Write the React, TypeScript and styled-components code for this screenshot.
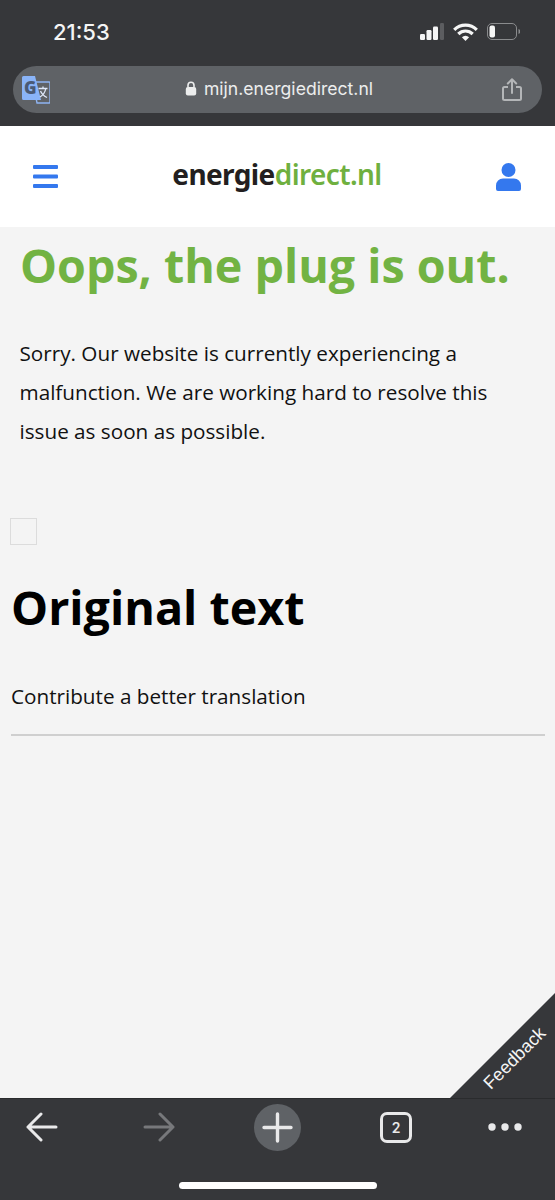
import { createGlobalStyle, styled } from "styled-components";

const GlobalStyle = createGlobalStyle`
    html, body {
        margin: 0;
        padding: 0;
        background: #36373a;
    }
    * { box-sizing: border-box; }
`

const Phone = styled.div`
    width: 555px;
    height: 1200px;
    display: flex;
    flex-direction: column;
    overflow: hidden;
    font-family: "Open Sans", sans-serif;
`

const BrowserTop = styled.div`
    height: 126px;
    background: #36373a;
    padding: 0 13px;
    display: flex;
    flex-direction: column;
`

const StatusBar = styled.div`
    height: 66px;
    padding: 0 22px 3px 40px;
    display: flex;
    align-items: center;
    justify-content: space-between;
    color: #f5f5f5;
`

const Clock = styled.span`
    font-family: Inter, sans-serif;
    font-size: 22px;
    font-weight: 500;
`

const StatusIcons = styled.div`
    display: flex;
    align-items: center;
    gap: 9px;
`

const AddressBar = styled.div`
    height: 47px;
    width: 529px;
    border-radius: 24px;
    background: #5f6266;
    display: flex;
    align-items: center;
    justify-content: space-between;
    padding: 0 20px 0 9px;
`

const Url = styled.div`
    display: flex;
    align-items: center;
    gap: 7px;
    margin: -2px 0 0 6px;
    color: #eceded;
    font-family: Inter, sans-serif;
    font-size: 17.6px;
`

const SiteHeader = styled.header`
    height: 101px;
    background: #fff;
    display: flex;
    align-items: center;
    justify-content: space-between;
    padding: 0 34px 0 33px;
`

const Logo = styled.div`
    font-family: "Noto Sans", sans-serif;
    font-size: 28px;
    font-weight: 700;
    line-height: 1;
    margin-top: -5px;
    letter-spacing: -0.6px;
    color: #231f20;
`

const LogoAccent = styled.span`
    font-weight: 600;
    color: #6fb03f;
`

const Main = styled.main`
    position: relative;
    flex: 1;
    background: #f4f4f4;
    display: flex;
    flex-direction: column;
`

const Notice = styled.section`
    padding: 6px 19px 0 20px;
`

const Title = styled.h1`
    margin: 0;
    font-size: 46.6px;
    line-height: 64px;
    font-weight: 700;
    white-space: nowrap;
    color: #72b343;
`

const Message = styled.p`
    margin: 37px 0 0 -0.5px;
    font-size: 20.7px;
    line-height: 39px;
    color: #111;
`

const Translation = styled.section`
    padding: 67px 10px 0 11px;
`

const BrokenImage = styled.div`
    width: 27px;
    height: 27px;
    margin-left: -1px;
    border: 1px solid #dcdcdc;
`

const Heading = styled.h2`
    margin: 24px 0 0;
    font-size: 46.7px;
    line-height: 76px;
    font-weight: 700;
    color: #000;
`

const Contribute = styled.p`
    margin: 35px 0 0;
    padding-bottom: 22px;
    font-size: 20.7px;
    line-height: 32px;
    color: #111;
    border-bottom: 2px solid #cfcfcf;
`

const FeedbackTab = styled.div`
    position: absolute;
    right: 0;
    bottom: 0;
    width: 105px;
    height: 105px;
    background: #36373a;
    clip-path: polygon(100% 0, 100% 100%, 0 100%);
`

const FeedbackLabel = styled.span`
    position: absolute;
    left: 25px;
    top: 54px;
    font-family: "Liberation Sans", sans-serif;
    font-size: 18px;
    line-height: 22px;
    color: #f5f5f5;
    transform: rotate(-45deg);
    white-space: nowrap;
`

const Toolbar = styled.nav`
    height: 102px;
    background: #36373a;
    border-top: 1px solid #2a2b2d;
    display: flex;
    flex-direction: column;
    align-items: center;
`

const ToolRow = styled.div`
    width: 100%;
    height: 56px;
    padding: 0 25px;
    display: grid;
    grid-template-columns: 34px 1fr 48px 1fr 34px;
    align-items: center;
    justify-items: center;
`

const ForwardSlot = styled.div`
    justify-self: start;
    margin-left: 84px;
    display: flex;
`

const TabsSlot = styled.div`
    justify-self: end;
    margin-right: 84px;
    display: flex;
`

const MoreSlot = styled.div`
    margin-right: 17px;
    display: flex;
`

const PlusCircle = styled.div`
    width: 47px;
    height: 47px;
    border-radius: 50%;
    background: #5f6266;
    display: flex;
    align-items: center;
    justify-content: center;
`

const TabCount = styled.div`
    width: 32px;
    height: 31px;
    border: 3px solid #e9e9ea;
    border-radius: 7px;
    color: #e9e9ea;
    font-family: Inter, sans-serif;
    font-size: 14px;
    font-weight: 600;
    display: flex;
    align-items: center;
    justify-content: center;
`

const HomeIndicator = styled.div`
    width: 198px;
    height: 7px;
    margin-top: 27px;
    border-radius: 4px;
    background: #fff;
`

function Signal() {
    return (
        <svg width="24" height="17" viewBox="0 0 24 17">
            <rect x="0" y="11" width="5" height="6" rx="1.2" fill="#f5f5f5" />
            <rect x="6.5" y="7" width="5" height="10" rx="1.2" fill="#f5f5f5" />
            <rect x="13" y="3.5" width="5" height="13.5" rx="1.2" fill="#f5f5f5" />
            <rect x="20" y="0" width="4" height="17" rx="1.2" fill="#5c5d60" />
        </svg>
    )
}

function Wifi() {
    return (
        <svg width="25" height="18" viewBox="0 0 25 18" fill="none" stroke="#f5f5f5" strokeWidth="3.200">
            <path d="M1.200 6.800a16 16 0 0 1 22.600 0" />
            <path d="M5.300 11a10.200 10.200 0 0 1 14.400 0" />
            <path d="M12.500 18l-3.600-3.800a5 5 0 0 1 7.200 0z" fill="#f5f5f5" stroke="none" />
        </svg>
    )
}

function Battery() {
    return (
        <svg width="33" height="17" viewBox="0 0 33 17" fill="none">
            <rect x="0.5" y="0.5" width="29" height="16" rx="4.5" stroke="#8a8b8d" />
            <rect x="2.5" y="2.5" width="5.5" height="12" rx="2" fill="#f5f5f5" />
            <path d="M31.5 6v5a2.6 2.6 0 0 0 0-5z" fill="#8a8b8d" />
        </svg>
    )
}

function TranslateIcon() {
    return (
        <svg width="28" height="28" viewBox="0 0 28 28">
            <path d="M11 6h16a1 1 0 0 1 1 1v19a1 1 0 0 1-1 1H15z" fill="#5f6266" stroke="#8fb4f2" strokeWidth="1.4" />
            <path d="M1.5 0H13l6 24H1.5A1.5 1.500 0 0 1 0 22.500V1.500A1.500 1.500 0 0 1 1.500 0z" fill="#8ab4f8" />
            <text x="2" y="18" fontFamily="Open Sans, sans-serif" fontSize="17" fontWeight="800" fill="#4a5a75">G</text>
            <path d="M16.500 12.500h9M21 10.500v2M18 21c3-1.800 5-4.200 5.800-8.500M18.500 15c1 2.500 3.500 5 6.500 6.500" fill="none" stroke="#dfe8f8" strokeWidth="1.300" />
        </svg>
    )
}

function Lock() {
    return (
        <svg width="12" height="15" viewBox="0 0 12 15">
            <path d="M3 6.500V4.200a3 3 0 0 1 6 0v2.300" fill="none" stroke="#eceded" strokeWidth="1.600" />
            <rect x="0.800" y="6" width="10.400" height="8.500" rx="2" fill="#eceded" />
        </svg>
    )
}

function ShareIcon() {
    return (
        <svg width="20" height="24" viewBox="0 0 20 24" fill="none" stroke="#b4b6b8" strokeWidth="2">
            <path d="M6 9H2.500A1.500 1.500 0 0 0 1 10.500v10A1.500 1.500 0 0 0 2.500 22h15a1.500 1.500 0 0 0 1.500-1.500v-10A1.500 1.500 0 0 0 17.500 9H14" />
            <path d="M10 15V1.500M5.800 5.500L10 1.300l4.200 4.200" strokeLinecap="round" strokeLinejoin="round" />
        </svg>
    )
}

function MenuIcon() {
    return (
        <svg width="25" height="23" viewBox="0 0 25 23" fill="#3478ee">
            <rect x="0" y="0" width="25" height="4" rx="1" />
            <rect x="0" y="9.500" width="25" height="4" rx="1" />
            <rect x="0" y="19" width="25" height="4" rx="1" />
        </svg>
    )
}

function UserIcon() {
    return (
        <svg width="25" height="28" viewBox="0 0 25 28" fill="#3478ee">
            <circle cx="12.500" cy="7" r="7" />
            <path d="M7 15.500h11a7 7 0 0 1 7 7V26a2 2 0 0 1-2 2H2a2 2 0 0 1-2-2v-3.500a7 7 0 0 1 7-7z" />
        </svg>
    )
}

function ArrowIcon({ flip, color }: { flip?: boolean; color: string }) {
    return (
        <svg width="32" height="30" viewBox="0 0 32 30" fill="none" stroke={color} strokeWidth="3" strokeLinecap="round" strokeLinejoin="round">
            <g transform={flip ? "matrix(-1 0 0 1 32 0)" : undefined}>
                <path d="M30 15H2M15 2L2 15l13 13" />
            </g>
        </svg>
    )
}

function PlusIcon() {
    return (
        <svg width="31" height="31" viewBox="0 0 31 31" stroke="#e9e9ea" strokeWidth="3.400" strokeLinecap="round">
            <path d="M15.500 2v27M2 15.500h27" />
        </svg>
    )
}

function MoreIcon() {
    return (
        <svg width="34" height="8" viewBox="0 0 34 8" fill="#e9e9ea">
            <circle cx="4" cy="4" r="3.700" />
            <circle cx="17" cy="4" r="3.700" />
            <circle cx="30" cy="4" r="3.700" />
        </svg>
    )
}

export default function App() {
    return (
        <Phone>
            <GlobalStyle />
            <BrowserTop>
                <StatusBar>
                    <Clock>21:53</Clock>
                    <StatusIcons>
                        <Signal />
                        <Wifi />
                        <Battery />
                    </StatusIcons>
                </StatusBar>
                <AddressBar>
                    <TranslateIcon />
                    <Url>
                        <Lock />
                        mijn.energiedirect.nl
                    </Url>
                    <ShareIcon />
                </AddressBar>
            </BrowserTop>

            <SiteHeader>
                <MenuIcon />
                <Logo>energie<LogoAccent>direct.nl</LogoAccent></Logo>
                <UserIcon />
            </SiteHeader>

            <Main>
                <Notice>
                    <Title>Oops, the plug is out.</Title>
                    <Message>
                        Sorry. Our website is currently experiencing a malfunction. We are working hard to resolve this issue as soon as possible.
                    </Message>
                </Notice>
                <Translation>
                    <BrokenImage />
                    <Heading>Original text</Heading>
                    <Contribute>Contribute a better translation</Contribute>
                </Translation>
                <FeedbackTab>
                    <FeedbackLabel>Feedback</FeedbackLabel>
                </FeedbackTab>
            </Main>

            <Toolbar>
                <ToolRow>
                    <ArrowIcon color="#e9e9ea" />
                    <ForwardSlot>
                        <ArrowIcon flip color="#77787b" />
                    </ForwardSlot>
                    <PlusCircle>
                        <PlusIcon />
                    </PlusCircle>
                    <TabsSlot>
                        <TabCount>2</TabCount>
                    </TabsSlot>
                    <MoreSlot>
                        <MoreIcon />
                    </MoreSlot>
                </ToolRow>
                <HomeIndicator />
            </Toolbar>
        </Phone>
    )
}
